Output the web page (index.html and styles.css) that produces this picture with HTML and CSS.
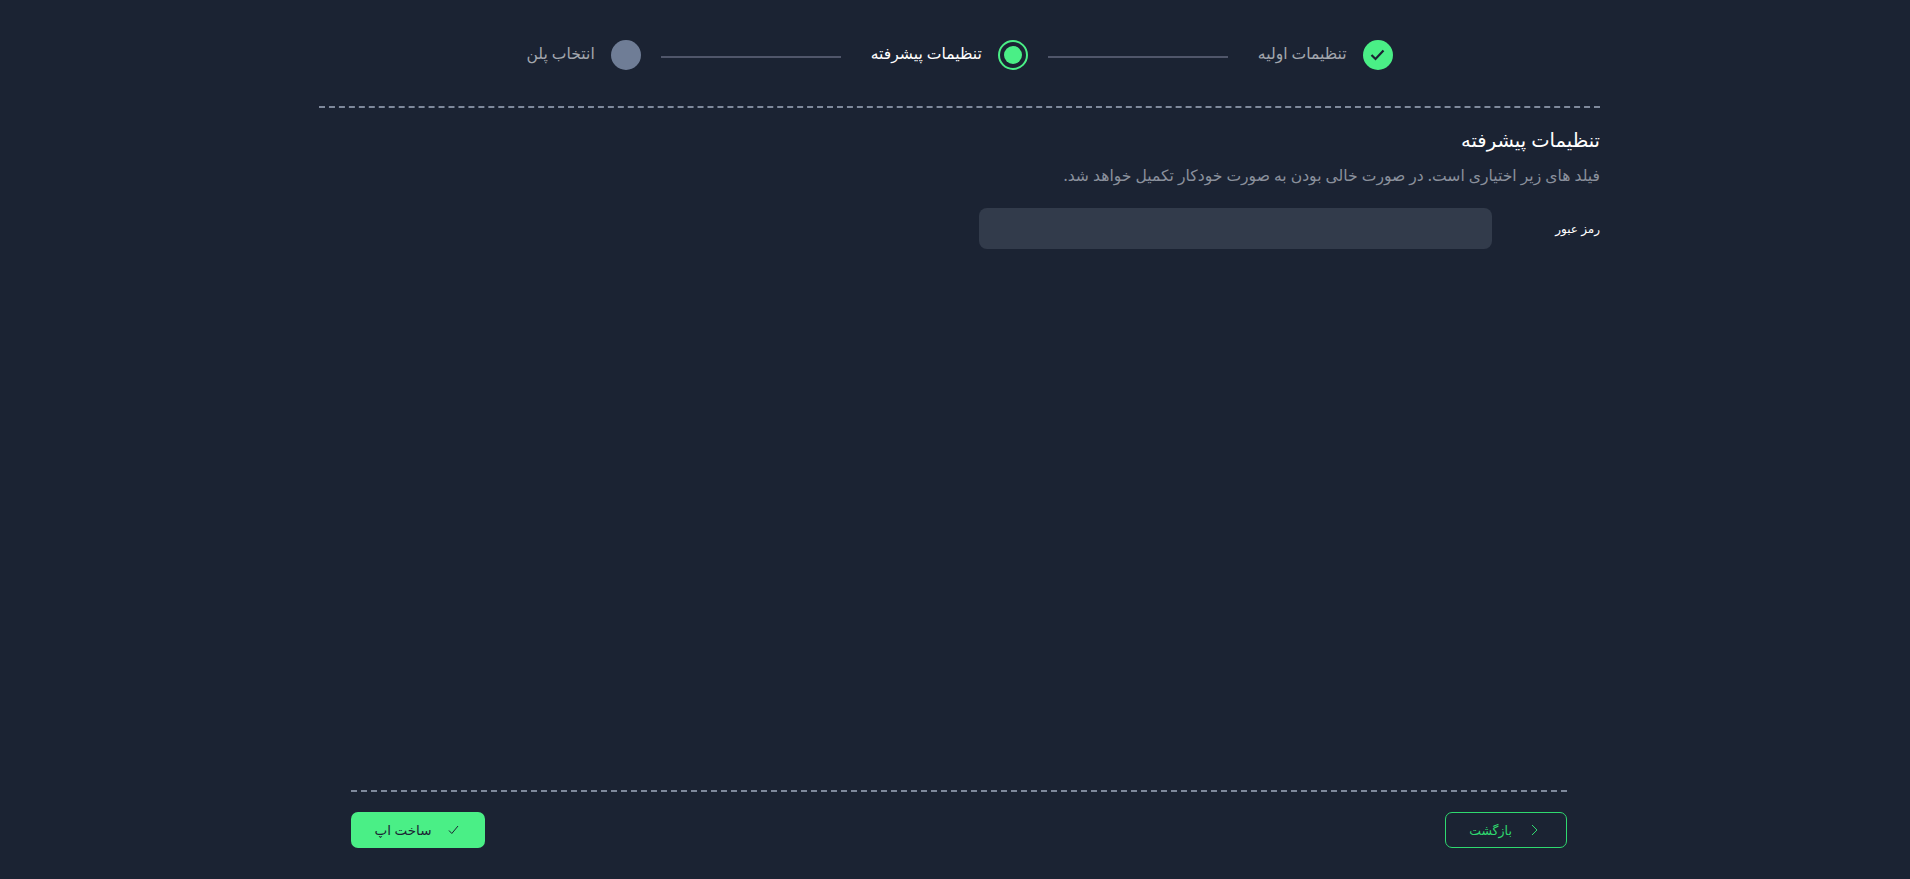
FILE: index.html
```html
<!DOCTYPE html>
<html lang="fa" dir="rtl">
<head>
  <meta charset="UTF-8">
  <title>ساخت اپ</title>
  <meta name="viewport" content="width=device-width, initial-scale=1.0">
  <link rel="stylesheet" href="styles.css">
</head>
<body>
  <div class="wizard">
    <!-- Steps -->
    <div class="stepper">
      <div class="step is-done">
        <span class="step-icon">
          <svg width="15" height="12" viewBox="0 0 15 12" fill="none"><path d="M1.5 6 5.5 10 13.5 1.5" stroke="#1b2333" stroke-width="2.2"/></svg>
        </span>
        <span class="step-label">تنظیمات اولیه</span>
      </div>
      <span class="step-line"></span>
      <div class="step is-current">
        <span class="step-icon"><span class="step-dot"></span></span>
        <span class="step-label">تنظیمات پیشرفته</span>
      </div>
      <span class="step-line"></span>
      <div class="step">
        <span class="step-icon"></span>
        <span class="step-label">انتخاب پلن</span>
      </div>
    </div>

    <!-- Form -->
    <main class="content">
      <h2 class="content-title">تنظیمات پیشرفته</h2>
      <p class="content-desc">فیلد های زیر اختیاری است. در صورت خالی بودن به صورت خودکار تکمیل خواهد شد.</p>
      <div class="form-row">
        <label class="form-label" for="password">رمز عبور</label>
        <input class="form-input" id="password" type="text">
      </div>
    </main>

    <!-- Actions -->
    <div class="actions">
      <button class="btn btn-outline" type="button">
        <svg width="7" height="12" viewBox="0 0 7 12" fill="none"><path d="M1 1 6 6 1 11" stroke="#2fd96f" stroke-width="1"/></svg>
        <span>بازگشت</span>
      </button>
      <button class="btn btn-primary" type="button">
        <svg width="11" height="10" viewBox="0 0 11 10" fill="none"><path d="M1 5.5 3.8 8.5 10 1" stroke="#1b2333" stroke-width="1"/></svg>
        <span>ساخت اپ</span>
      </button>
    </div>
  </div>
</body>
</html>
```

FILE: styles.css
```css
/* Base */
body {
  margin: 0;
  padding-left: 9px;
  background: #1b2333;
  color: #fff;
  font-family: "Noto Sans", "DejaVu Sans", sans-serif;
}
.wizard {
  width: 1281px;
  height: 879px;
  margin: 0 auto;
  display: flex;
  flex-direction: column;
}
/* Stepper */
.stepper {
  display: flex;
  align-items: center;
  justify-content: center;
  padding: 40px 0 36px;
  border-bottom: 2px dashed #7f899c;
}
.step {
  display: flex;
  align-items: center;
  gap: 16px;
}
.step-icon {
  width: 30px;
  height: 30px;
  border-radius: 50%;
  background: #6f7d96;
  display: flex;
  align-items: center;
  justify-content: center;
  box-sizing: border-box;
}
.step-label {
  font-size: 15.6px;
  line-height: 24px;
  margin-bottom: 4px;
  color: #a3a7ae;
}
.step-line {
  width: 180px;
  height: 2px;
  background: #50566a;
  margin: 4px 30px 0 20px;
}
.is-done .step-icon {
  background: #4aef86;
}
.is-current .step-icon {
  background: transparent;
  border: 2px solid #4aef86;
}
.is-current .step-label {
  color: #fff;
}
.step-dot {
  width: 18px;
  height: 18px;
  border-radius: 50%;
  background: #4aef86;
}
/* Content */
.content {
  flex: 1;
  padding-top: 18px;
}
.content-title {
  margin: 0;
  font-size: 19.5px;
  line-height: 28px;
  font-weight: 500;
}
.content-desc {
  margin: 8px 0 0;
  font-size: 15.6px;
  line-height: 26px;
  color: #8a909c;
}
.form-row {
  display: flex;
  align-items: center;
  margin-top: 20px;
}
.form-label {
  width: 108px;
  font-size: 12px;
  font-weight: 500;
}
.form-input {
  width: 513px;
  height: 41px;
  padding: 0 12px;
  box-sizing: border-box;
  border: 0;
  border-radius: 8px;
  background: #323b4b;
  color: #fff;
}
/* Footer */
.actions {
  margin: 0 33px 0 32px;
  height: 89px;
  padding-top: 20px;
  box-sizing: border-box;
  border-top: 2px dashed #7f899c;
  display: flex;
  justify-content: space-between;
  align-items: flex-start;
}
.btn {
  height: 36px;
  display: flex;
  align-items: center;
  justify-content: center;
  border-radius: 7px;
  font-family: inherit;
  font-weight: 500;
  cursor: pointer;
}
.btn-outline {
  width: 122px;
  padding: 0 5px 0 0;
  gap: 19px;
  background: transparent;
  border: 1px solid #2fd96f;
  color: #2fd96f;
  font-size: 12.5px;
}
.btn-primary {
  width: 134px;
  padding: 0 3px 0 0;
  gap: 16px;
  background: #4aef86;
  border: 0;
  color: #1b2333;
  font-size: 13.5px;
}
```
